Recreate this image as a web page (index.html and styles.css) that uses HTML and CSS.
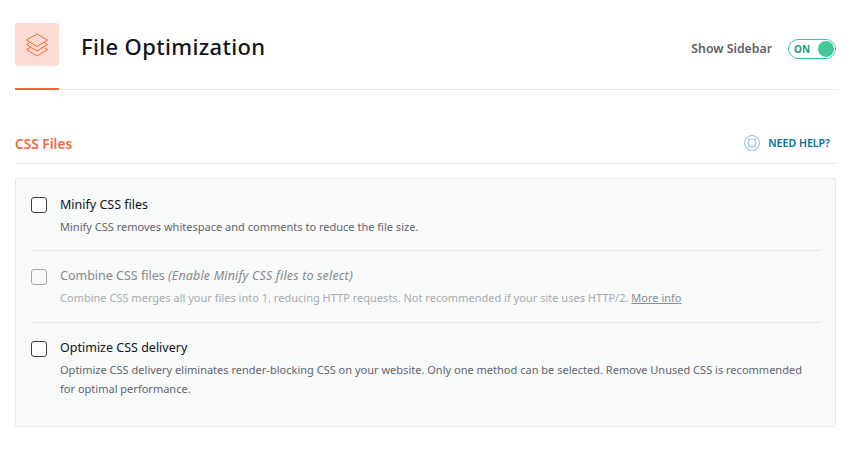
FILE: index.html
```
<!DOCTYPE html>
<html lang="en">
<head>
<meta charset="utf-8">
<title>File Optimization</title>
<link rel="stylesheet" href="styles.css">
</head>
<body>
<main class="page">
  <header class="top">
    <div class="title-group">
      <div class="title-tab">
        <div class="title-icon">
          <svg width="24" height="24" viewBox="0 0 24 24" fill="none" stroke="#f56640" stroke-width="1" stroke-linejoin="round">
            <path d="M12 1 22.5 7 12 13.5 1.5 7Z"/>
            <path d="M5 9.5 1.5 11.5 12 18 22.5 11.5 19 9.5"/>
            <path d="M5 14.5 1.5 16.5 12 23 22.5 16.5 19 14.5"/>
          </svg>
        </div>
      </div>
      <h1 class="title">File Optimization</h1>
    </div>
    <div class="sidebar-toggle">
      <span class="toggle-label">Show Sidebar</span>
      <span class="switch"><span class="switch-text">ON</span><span class="switch-knob"></span></span>
    </div>
  </header>

  <section class="section">
    <div class="section-head">
      <h2 class="section-title">CSS Files</h2>
      <a class="help">
        <svg width="18" height="18" viewBox="0 0 18 18" fill="none" stroke="#8fc2d6" stroke-width="1">
          <circle cx="9" cy="9" r="7.5"/>
          <circle cx="9" cy="9" r="4"/>
          <path d="M3.8 3.8 6.2 6.2M14.2 3.8 11.8 6.2M3.8 14.2 6.2 11.8M14.2 14.2 11.8 11.8"/>
        </svg>
        <span>NEED HELP?</span>
      </a>
    </div>

    <div class="panel">
      <div class="option">
        <span class="checkbox"></span>
        <div class="option-body">
          <div class="option-title">Minify CSS files</div>
          <p class="option-desc">Minify CSS removes whitespace and comments to reduce the file size.</p>
        </div>
      </div>
      <div class="option option-disabled">
        <span class="checkbox"></span>
        <div class="option-body">
          <div class="option-title">Combine CSS files <em>(Enable Minify CSS files to select)</em></div>
          <p class="option-desc">Combine CSS merges all your files into 1, reducing HTTP requests. Not recommended if your site uses HTTP/2. <a class="more">More info</a></p>
        </div>
      </div>
      <div class="option">
        <span class="checkbox"></span>
        <div class="option-body">
          <div class="option-title">Optimize CSS delivery</div>
          <p class="option-desc">Optimize CSS delivery eliminates render-blocking CSS on your website. Only one method can be selected. Remove Unused CSS is recommended for optimal performance.</p>
        </div>
      </div>
    </div>
  </section>
</main>
</body>
</html>
```
FILE: styles.css
```
* { box-sizing: border-box; }
html, body { margin: 0; padding: 0; background: #fff; }
body { font-family: "Noto Sans", "Open Sans", sans-serif; color: #1f2332; }
.page { width: 821px; margin-left: 15px; padding-top: 23px; }
.top {
  display: flex; justify-content: space-between; align-items: flex-start;
  height: 67px; border-bottom: 1px solid #e6e6e9;
}
.title-group { display: flex; align-items: flex-start; gap: 22px; }
.title-tab { width: 44px; height: 67px; border-bottom: 2px solid #f56640; }
.title-icon {
  width: 44px; height: 43px; border-radius: 3px; background: #fedcd4;
  display: flex; align-items: center; justify-content: center;
}
.title { margin: 8px 0 0; font-size: 22px; font-weight: 500; line-height: 30px; letter-spacing: .35px; color: #12141f; }
.sidebar-toggle { display: flex; align-items: center; gap: 16px; height: 52px; }
.toggle-label { font-size: 12.3px; font-weight: 600; color: #5f5f66; margin-top: -2px; }
.switch {
  width: 48px; height: 20px; border: 1px solid #40c79a; border-radius: 10px;
  display: flex; align-items: center; justify-content: space-between; padding: 0 0 0 5px;
}
.switch-text { font-size: 10px; font-weight: 700; color: #1d9e78; letter-spacing: .2px; }
.switch-knob { width: 18px; height: 18px; border-radius: 50%; background: #40c79a; border: 1px solid #fff; }
.section { margin-top: 34px; }
.section-head {
  display: flex; justify-content: space-between; align-items: center;
  height: 40px; border-bottom: 1px solid #e6e6ee; padding: 0 6px 1px 0;
}
.section-title { margin: 0; font-size: 13.7px; font-weight: 600; color: #f56640; }
.help { display: flex; align-items: center; gap: 7px; font-size: 10.6px; font-weight: 600; color: #086f92; }
.panel {
  margin-top: 14px; height: 249px; background: #f8f9f9; border: 1px solid #eaeaec; border-radius: 2px;
  padding: 0 14px;
}
.option { display: flex; gap: 13px; padding: 15px 12px 0 1px; height: 72px; border-bottom: 1px solid #e6e6ee; }
.option:first-child { padding-top: 16px; }
.option:last-child { border-bottom: 0; }
.checkbox { flex: none; width: 16px; height: 16px; margin-top: 3px; border: 1px solid #3d3d44; border-radius: 3px; background: #fff; }
.option:first-child .checkbox { margin-top: 2px; }
.option-title { font-size: 12.5px; font-weight: 400; line-height: 20px; color: #12141f; }
.option-title em { letter-spacing: .16px; }
.option-desc { margin: 2px 0 0; font-size: 11px; line-height: 19px; letter-spacing: .01px; color: #63656e; }
.option-disabled .option-desc { color: #a9abaf; }
.option-disabled .option-title { color: #88898e; }
.option-disabled .checkbox { border-color: #a9a9ad; background: transparent; }
.more { color: #8c8e93; text-decoration: underline; }
```
